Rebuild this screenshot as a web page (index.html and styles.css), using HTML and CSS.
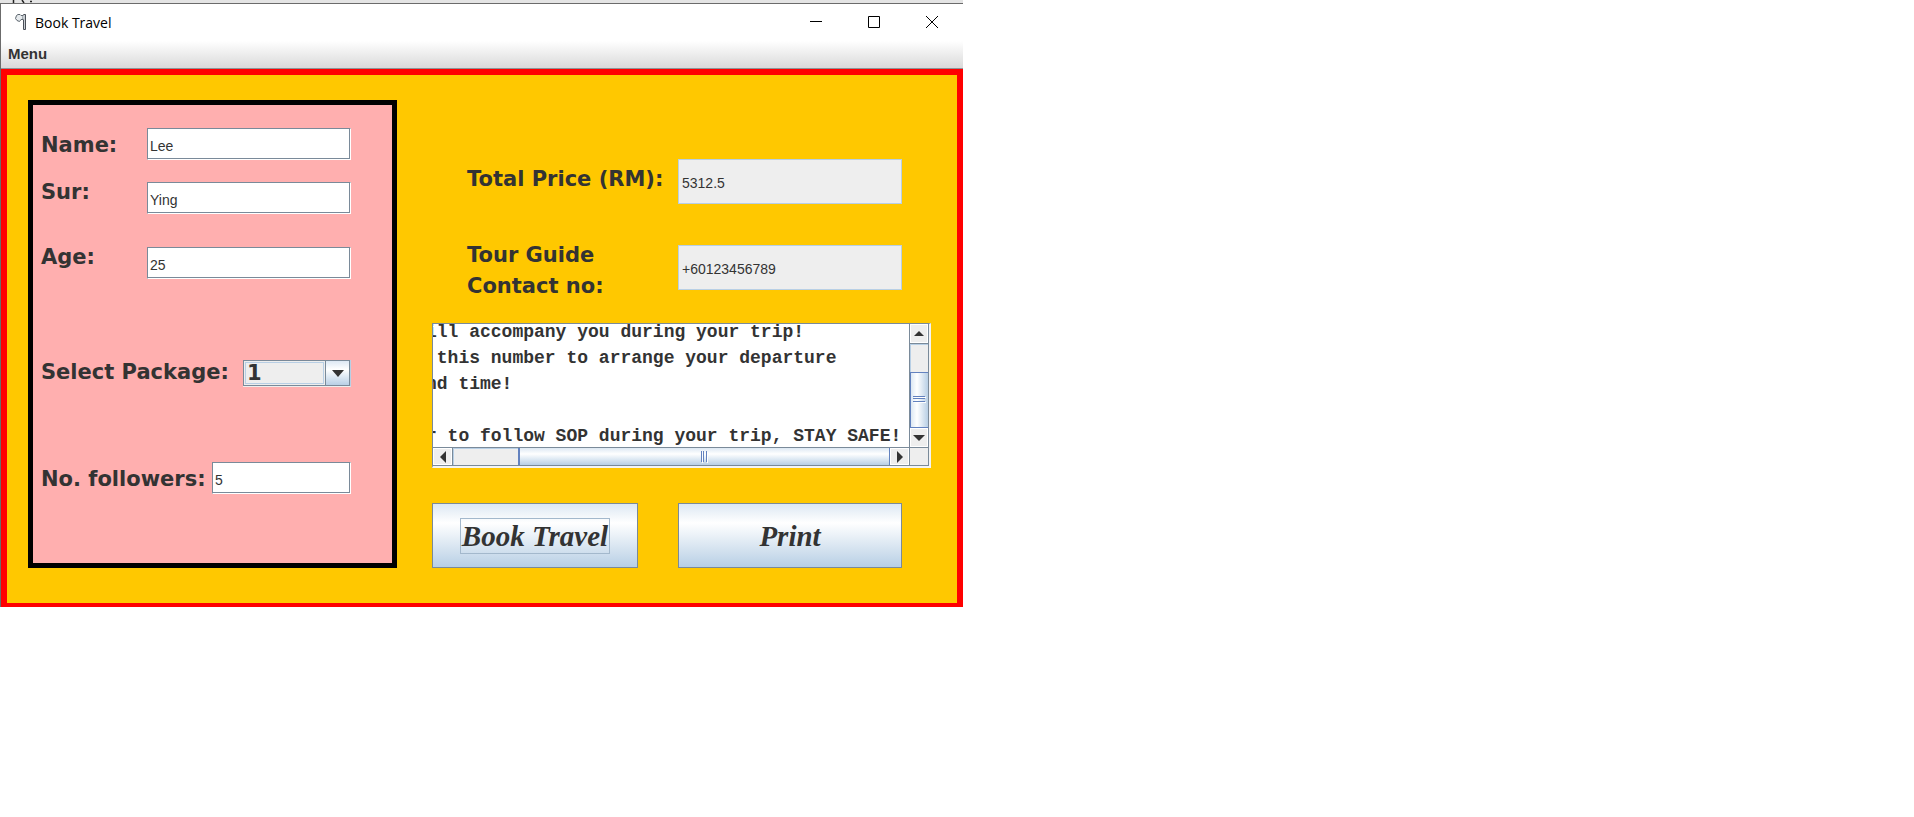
FILE: index.html
```html
<!DOCTYPE html>
<html lang="en">
<head>
<meta charset="utf-8">
<title>Book Travel</title>
<link rel="stylesheet" href="styles.css">
</head>
<body>
<div class="backdrop">
  <svg class="backdrop-marks" viewBox="0 0 40 3" width="40" height="3" aria-hidden="true"><path d="M13.500 0v3M22 0 24 3M30 1.500h2" stroke="#222" stroke-width="1.500" fill="none"/></svg>
</div>
<div class="window">
  <header class="titlebar">
    <svg class="app-icon" viewBox="0 0 12 18" width="12" height="18" aria-hidden="true">
      <path d="M1.500 2.500 3 1.500H5L6 2.500H8V6.500H6L4.500 8.500 2 7.500.5 5.500Z" fill="#e6eaed" stroke="#5d666e"/>
      <path d="M7.500 2.500 9 1.500H10.500V16.500H8.500V6.500" fill="#c9ced3" stroke="#4a4f57"/>
    </svg>
    <h1 class="title">Book Travel</h1>
    <div class="controls">
      <button class="control" aria-label="Minimize"><svg viewBox="0 0 12 12" width="12" height="12"><path d="M0 5.500h12" stroke="#000"/></svg></button>
      <button class="control" aria-label="Maximize"><svg viewBox="0 0 12 12" width="12" height="12"><path d="M.5.5h11v11H.5z" stroke="#000" fill="none"/></svg></button>
      <button class="control" aria-label="Close"><svg viewBox="0 0 12 12" width="12" height="12"><path d="M0 0 12 12M12 0 0 12" stroke="#000"/></svg></button>
    </div>
  </header>
  <nav class="menubar"><button class="menu">Menu</button></nav>
  <main class="content">
    <form class="panel">
      <div class="row row-name"><label for="name">Name:</label><input class="field" id="name" value="Lee"></div>
      <div class="row row-sur"><label for="sur">Sur:</label><input class="field" id="sur" value="Ying"></div>
      <div class="row row-age"><label for="age">Age:</label><input class="field" id="age" value="25"></div>
      <div class="row row-package"><label for="package">Select Package:</label>
        <div class="combo">
          <select id="package"><option>1</option></select>
          <span class="combo-arrow"><svg viewBox="0 0 12 7" width="12" height="7" aria-hidden="true"><path d="M0 0h12L6 7z" fill="#333"/></svg></span>
        </div>
      </div>
      <div class="row row-followers"><label for="followers">No. followers:</label><input class="field" id="followers" value="5"></div>
    </form>
    <section class="results">
      <div class="info info-price"><label for="price">Total Price (RM):</label><input class="output" id="price" value="5312.5" readonly></div>
      <div class="info info-contact"><label for="contact">Tour Guide<br>Contact no:</label><input class="output" id="contact" value="+60123456789" readonly></div>
      <div class="scrollpane">
        <div class="viewport"><textarea class="notes" aria-label="Trip notes" wrap="off" readonly>ill accompany you during your trip!
 this number to arrange your departure
nd time!

r to follow SOP during your trip, STAY SAFE!</textarea></div>
        <div class="vbar">
          <button class="arrow" aria-label="Scroll up"><svg viewBox="0 0 10 5" width="10" height="5"><path d="M0 5 5 0l5 5z" fill="#333"/></svg></button>
          <div class="track"></div>
          <div class="thumb"><svg viewBox="0 0 13 7" width="13" height="7" aria-hidden="true"><path d="M0 .5h12M0 2.500h12M0 5.500h12" stroke="#6382bf"/><path d="M1 1.500h12M1 6.500h12" stroke="#fff"/></svg></div>
          <button class="arrow" aria-label="Scroll down"><svg viewBox="0 0 12 6" width="12" height="6"><path d="M0 0h12L6 6z" fill="#333"/></svg></button>
        </div>
        <div class="hbar">
          <button class="arrow" aria-label="Scroll left"><svg viewBox="0 0 6 12" width="6" height="12"><path d="M6 0v12L0 6z" fill="#333"/></svg></button>
          <div class="track"></div>
          <div class="thumb"><svg viewBox="0 0 7 12" width="7" height="12" aria-hidden="true"><path d="M.5 0v11M2.500 0v11M5.500 0v11" stroke="#6382bf"/><path d="M1.500 1v11M6.500 1v11" stroke="#fff"/></svg></div>
          <button class="arrow" aria-label="Scroll right"><svg viewBox="0 0 6 12" width="6" height="12"><path d="M0 0v12l6-6z" fill="#333"/></svg></button>
        </div>
        <div class="corner"></div>
      </div>
      <div class="actions">
        <button class="action"><span class="focus">Book Travel</span></button>
        <button class="action">Print</button>
      </div>
    </section>
  </main>
</div>
</body>
</html>
```
FILE: styles.css
```css
* { box-sizing: border-box; }

body {
  margin: 0;
  background: #fff;
  color: #333;
  font-family: "Liberation Sans", Arial, sans-serif;
  font-size: 14px;
}

button, input, select, textarea {
  margin: 0;
  padding: 0;
  border: 0;
  border-radius: 0;
  color: inherit;
  font: inherit;
}

svg { display: block; }

.backdrop, .window { max-width: 963px; }

.backdrop { height: 3px; background: #e4e4e4; }

.window {
  border-top: 1px solid #6b6b6b;
  border-left: 1px solid #6b6b6b;
}

.titlebar {
  display: flex;
  align-items: center;
  height: 37px;
  padding: 0 2px 1px 14px;
}

.title {
  flex: 1;
  margin: 0 0 0 8px;
  color: #000;
  font: 14px "Open Sans", sans-serif;
}

.controls { display: flex; }

.control {
  display: grid;
  place-items: center;
  width: 58px;
  height: 34px;
  background: none;
}

.menubar {
  height: 28px;
  border-bottom: 1px solid #8e9499;
  background: linear-gradient(#fff, #dadada);
}

.menu {
  padding: 4px 7px;
  background: none;
  font-size: 15px;
  font-weight: bold;
  line-height: 17px;
}

.content {
  display: flex;
  gap: 35px;
  padding: 25px 26px 35px 21px;
  border: 6px solid #f00;
  border-bottom-width: 4px;
  background: #ffc800;
}

.panel {
  flex: 0 0 369px;
  min-width: 0;
  padding: 23px 41px 69px 8px;
  border: 5px solid #000;
  background: #ffafaf;
}

label {
  font: bold 21px/24px "DejaVu Sans", Verdana, sans-serif;
  white-space: nowrap;
}

.row { display: flex; justify-content: space-between; }
.row label { flex: 0 0 106px; padding-top: 2px; }
.row-name { align-items: center; }
.row-sur, .row-age { height: 36px; align-items: flex-start; }
.row-sur .field, .row-age .field { align-self: flex-end; }
.row-sur { margin-top: 18px; }
.row-age { margin-top: 29px; }
.row-package { height: 29px; margin-top: 79px; }
.row-package label { flex-basis: 202px; }
.row-followers { align-items: center; margin-top: 75px; }
.row-followers label { flex-basis: 171px; }

.field {
  flex: 1;
  min-width: 0;
  height: 32px;
  padding: 3px 2px 0;
  border: 1px solid #7a8a99;
  border-right-color: #fff;
  border-bottom-color: #fff;
  background: #fff;
  box-shadow: inset -1px -1px #7a8a99;
}

.combo {
  display: flex;
  flex: 1;
  align-self: flex-end;
  min-width: 0;
  height: 27px;
  border-right: 1px solid #b8cfe5;
  border-bottom: 1px solid #eee;
}

.combo select {
  flex: 1;
  min-width: 0;
  padding-left: 3px;
  border: 1px solid #7a8a99;
  background: #eee;
  box-shadow: inset 0 0 0 1px #eee, inset 0 0 0 2px #b8cfe5;
  font: bold 21px/24px "DejaVu Sans", Verdana, sans-serif;
  appearance: none;
}

.combo-arrow {
  display: grid;
  place-items: center;
  width: 24px;
  border: 1px solid #7a8a99;
  border-left: 0;
  background: linear-gradient(#dde8f3, #fff 35%, #b8cfe5);
}

.results { flex: 1; min-width: 0; }

.info {
  display: grid;
  grid-template-columns: 211px 1fr;
  padding: 0 29px 0 35px;
}

.info-price { padding-top: 59px; }
.info-price label { padding-top: 8px; }
.info-contact { margin-top: 36px; }
.info-contact label { line-height: 31px; }
.info-contact .output { margin-top: 5px; }

.output {
  width: 100%;
  height: 45px;
  padding: 2px 3px 0;
  border: 1px solid #b8cfe5;
  background: #eee;
}

.scrollpane {
  display: grid;
  grid-template-columns: 1fr 20px;
  grid-template-rows: 123px 19px;
  margin-top: 21px;
  border: 1px solid #7a8a99;
  border-right: 2px solid #f4f4f4;
  border-bottom: 2px solid #f4f4f4;
  background: #fff;
}

.viewport { min-width: 0; overflow: hidden; }

.notes {
  display: block;
  width: calc(100% + 7px);
  height: 134px;
  margin: -5px 0 0 -7px;
  overflow: hidden;
  background: #fff;
  font: bold 18px/26px "Liberation Mono", "Courier New", monospace;
  resize: none;
}

.vbar, .hbar { display: flex; min-width: 0; }

.vbar { flex-direction: column; border: solid #7a8a99; border-width: 0 1px; }
.hbar { border: solid #7a8a99; border-width: 1px 0; }

.arrow {
  display: grid;
  flex: 0 0 19px;
  place-items: center;
  border: 1px solid #fff;
  background: #eee;
}

.thumb { display: grid; place-items: center; }

.vbar .track { flex: 29; border-top: 1px solid #7a8a99; background: #eee; box-shadow: inset 1px 1px #b8cfe5; }
.vbar .thumb {
  flex: 56;
  border: solid #6382bf;
  border-width: 1px 0 1px 1px;
  background: linear-gradient(90deg, #dde8f3, #fff 35%, #b8cfe5);
}

.hbar .track { flex: 66; border-left: 1px solid #7a8a99; background: #eee; box-shadow: inset 1px 1px #b8cfe5; }
.hbar .thumb {
  flex: 372;
  border: solid #6382bf;
  border-width: 0 1px 0 2px;
  background: linear-gradient(#dde8f3, #fff 35%, #b8cfe5);
}

.corner {
  border: solid #7a8a99;
  border-width: 1px 1px 1px 1px;
  background: #eee;
}

.actions {
  display: grid;
  grid-template-columns: 206fr 224fr;
  gap: 40px;
  margin-top: 35px;
  padding-right: 29px;
}

.action {
  display: grid;
  place-items: center;
  height: 65px;
  border: 1px solid #7a8a99;
  background: linear-gradient(#dde8f3, #fff 30%, #b8cfe5);
  font: italic bold 29px/34px "Liberation Serif", "Times New Roman", serif;
}

.focus { padding: 0 1px; border: 1px solid #a3b8cc; }
```
